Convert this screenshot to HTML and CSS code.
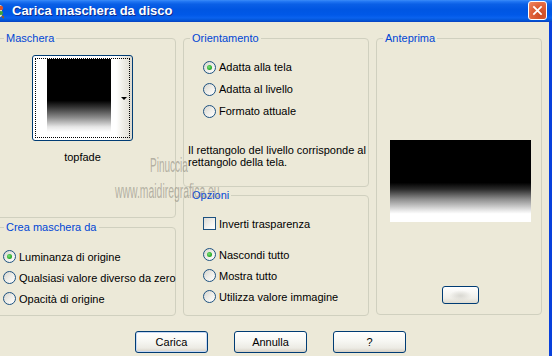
FILE: index.html
```html
<!DOCTYPE html>
<html lang="it">

<head>
    <meta charset="UTF-8">
    <meta name="viewport" content="width=device-width, initial-scale=1.0">
    <title>Carica maschera da disco</title>
    <link rel="stylesheet" href="styles.css">
</head>

<body>
    <div class="window">
        <div class="titlebar">
            <svg class="app-icon" viewBox="0 0 16 16">
                <rect x="2" y="2" width="12" height="12" rx="2" fill="#f2e6c8" />
                <circle cx="13" cy="5" r="2.2" fill="#e0542a" />
                <circle cx="13" cy="10" r="2" fill="#3aa53a" />
                <path d="M14 13 L16 15" stroke="#8b5a2b" stroke-width="2" />
            </svg>
            <span class="title">Carica maschera da disco</span>
            <span class="close-btn">
                <svg viewBox="0 0 19 19">
                    <path d="M5.5 5.5 L13.5 13.5 M13.5 5.5 L5.5 13.5" stroke="#fff" stroke-width="2" stroke-linecap="square" />
                </svg>
            </span>
        </div>

        <div class="dialog">
            <div class="columns">
                <div class="col col-left">
                    <fieldset class="group group-mask">
                        <legend>Maschera</legend>
                        <div class="mask-pick">
                            <div class="mask-btn">
                                <div class="mask-focus">
                                    <div class="mask-thumb"></div>
                                </div>
                                <span class="drop-arrow"></span>
                            </div>
                            <div class="mask-name">topfade</div>
                        </div>
                    </fieldset>
                    <fieldset class="group group-source">
                        <legend>Crea maschera da</legend>
                        <div class="opts opts-source">
                            <label class="opt"><span class="radio on"></span>Luminanza di origine</label>
                            <label class="opt"><span class="radio"></span>Qualsiasi valore diverso da zero</label>
                            <label class="opt"><span class="radio"></span>Opacità di origine</label>
                        </div>
                    </fieldset>
                </div>

                <div class="col col-mid">
                    <fieldset class="group group-orient">
                        <legend>Orientamento</legend>
                        <div class="opts opts-orient">
                            <label class="opt"><span class="radio on"></span>Adatta alla tela</label>
                            <label class="opt"><span class="radio"></span>Adatta al livello</label>
                            <label class="opt"><span class="radio"></span>Formato attuale</label>
                        </div>
                        <p class="note">Il rettangolo del livello corrisponde al rettangolo della tela.</p>
                    </fieldset>
                    <fieldset class="group group-options">
                        <legend>Opzioni</legend>
                        <div class="opts opts-options">
                            <label class="opt opt-check"><span class="checkbox"></span>Inverti trasparenza</label>
                            <div class="opt-gap"></div>
                            <label class="opt"><span class="radio on"></span>Nascondi tutto</label>
                            <label class="opt"><span class="radio"></span>Mostra tutto</label>
                            <label class="opt"><span class="radio"></span>Utilizza valore immagine</label>
                        </div>
                    </fieldset>
                </div>

                <div class="col col-right">
                    <fieldset class="group group-preview">
                        <legend>Anteprima</legend>
                        <div class="preview">
                            <div class="preview-img"></div>
                            <span class="preview-btn"></span>
                        </div>
                    </fieldset>
                </div>
            </div>

            <div class="actions">
                <span class="btn btn-default">Carica</span>
                <span class="btn">Annulla</span>
                <span class="btn">?</span>
            </div>
        </div>

        <!-- filigrana sopra la finestra -->
        <div class="watermark">
            <div class="wm-line wm-1">Pinuccia</div>
            <div class="wm-line wm-2">www.maidiregrafica.eu</div>
        </div>
    </div>
</body>

</html>
```

FILE: styles.css
```css
:root {
    --face: #ECE9D8;
    --group-line: #D0D0BF;
    --group-title: #0046D5;
    --ctrl-border: #1C5180;
    --btn-border: #003C74;
}

body {
    margin: 0;
    font-family: "Liberation Sans", Arial, sans-serif;
    font-size: 11px;
    color: #000;
}

.window {
    position: relative;
    width: 552px;
    height: 356px;
    overflow: hidden;
    background-color: var(--face);
}

/* barra del titolo stile XP */
.titlebar {
    display: flex;
    align-items: center;
    height: 22px;
    box-sizing: border-box;
    border-bottom: 1px solid #0846c6;
    background: linear-gradient(#3b8cf8 0%, #1f74f2 8%, #0a5fe6 20%, #0056e2 45%, #0058e8 70%, #0a62ee 85%, #0050d0 100%);
    color: #fff;
}

.app-icon {
    flex: none;
    width: 16px;
    height: 16px;
    margin-left: -12px;
    margin-right: 8px;
}

.title {
    flex: 1;
    font-size: 13px;
    font-weight: bold;
    text-shadow: 1px 1px 0 #0c2a8c;
}

.close-btn {
    width: 19px;
    height: 19px;
    margin-right: 5px;
    box-sizing: border-box;
    border: 1px solid #fff;
    border-radius: 3px;
    background: radial-gradient(circle at 70% 75%, #cc4a22 0%, #e0623a 55%, #f08a66 100%);
}

.close-btn svg {
    display: block;
    width: 17px;
    height: 17px;
}

.dialog {
    height: 334px;
    box-sizing: border-box;
    padding-top: 10px;
    border-right: 3px solid #0840dc;
}

.columns {
    display: flex;
    gap: 7px;
    margin-left: -5px;
}

.col {
    display: flex;
    flex-direction: column;
}

.col-left {
    width: 181px;
    gap: 3px;
}

.col-mid {
    width: 186px;
    gap: 2px;
}

.col-right {
    width: 166px;
}

.group {
    margin: 0;
    padding: 0;
    min-width: 0;
    box-sizing: border-box;
    border: 1px solid var(--group-line);
    border-radius: 4px;
}

.group legend {
    margin-left: 6px;
    padding: 0 2px;
    font-size: 11px;
    line-height: 13px;
    color: var(--group-title);
}

.col-left .group legend {
    margin-left: 8px;
}

.group-mask { height: 186px; }
.group-source { height: 95px; }
.group-orient { height: 155px; }
.group-options { height: 127px; }
.group-preview { height: 283px; }

/* selettore maschera */
.mask-pick {
    display: inline-flex;
    flex-direction: column;
    align-items: center;
    margin: 10px 0 0 36px;
}

.mask-btn {
    position: relative;
    width: 101px;
    height: 86px;
    box-sizing: border-box;
    padding: 2px;
    border: 1px solid var(--btn-border);
    border-radius: 3px;
    background: linear-gradient(to right, #fff 84%, #f1f0ea 90%, #dcd9cf 100%);
}

.mask-focus {
    height: 100%;
    box-sizing: border-box;
    border: 1px dotted #000;
    padding-left: 11px;
}

.mask-thumb {
    width: 64px;
    height: 73px;
    background: linear-gradient(#000 0%, #000 57%, #333 66%, #8a8a8a 80%, #e6e6e6 93%, #fff 100%);
}

.drop-arrow {
    position: absolute;
    right: 5px;
    top: 41px;
    border-left: 3px solid transparent;
    border-right: 3px solid transparent;
    border-top: 3px solid #000;
}

.mask-name {
    margin-top: 10px;
    line-height: 13px;
}

/* opzioni radio e checkbox */
.opts {
    display: flex;
    flex-direction: column;
}

.opt {
    display: flex;
    align-items: center;
    gap: 3px;
    height: 21px;
    white-space: nowrap;
}

.opts-orient {
    margin-top: 11px;
    padding-left: 19px;
}

.opts-orient .opt {
    height: 22px;
}

.opts-options {
    margin-top: 11px;
    padding-left: 19px;
}

.opt-gap {
    height: 10px;
}

.opts-source {
    margin-top: 12px;
    padding-left: 7px;
}

.radio {
    position: relative;
    flex: none;
    width: 13px;
    height: 13px;
    box-sizing: border-box;
    border: 1px solid var(--ctrl-border);
    border-radius: 50%;
    background: linear-gradient(135deg, #d6d5ce 0%, #eeede8 50%, #fff 100%);
}

.radio.on::after {
    content: "";
    position: absolute;
    left: 3px;
    top: 3px;
    width: 5px;
    height: 5px;
    border-radius: 50%;
    background: radial-gradient(circle at 40% 40%, #7ee07e 0%, #2fb02f 55%, #1a8f1a 100%);
}

.checkbox {
    flex: none;
    width: 13px;
    height: 13px;
    box-sizing: border-box;
    border: 1px solid var(--ctrl-border);
    background: linear-gradient(135deg, #dcdbd5 0%, #f4f3ef 60%, #fff 100%);
}

.note {
    margin: 22px 0 0 4px;
    line-height: 12px;
}

/* anteprima */
.preview {
    display: flex;
    flex-direction: column;
    align-items: center;
    padding-left: 3px;
}

.preview-img {
    width: 141px;
    height: 82px;
    margin-top: 95px;
    background: linear-gradient(#000 0%, #000 52%, #2a2a2a 60%, #8c8c8c 72%, #e8e8e8 86%, #fff 90%, #fff 100%);
}

.preview-btn {
    width: 37px;
    height: 18px;
    margin-top: 64px;
    box-sizing: border-box;
    border: 1px solid var(--btn-border);
    border-radius: 3px;
    background:
        radial-gradient(ellipse at 50% 55%, #d9d8d2 0%, rgba(255, 255, 255, 0) 45%),
        linear-gradient(#fff, #f0efe9 70%, #dedbd0);
}

/* pulsanti in basso */
.actions {
    display: flex;
    gap: 26px;
    margin-top: 15px;
    padding-left: 135px;
}

.btn {
    display: flex;
    align-items: center;
    justify-content: center;
    width: 73px;
    height: 22px;
    box-sizing: border-box;
    border: 1px solid var(--btn-border);
    border-radius: 3px;
    background: linear-gradient(#fff 0%, #f7f7f3 45%, #ecebe4 80%, #d6d0c5 100%);
}

.btn-default {
    box-shadow: inset 0 0 0 1px #c6d8f4;
}

/* filigrana */
.watermark {
    position: absolute;
    left: 0;
    top: 152px;
    font-size: 20px;
    line-height: 26px;
    color: rgba(130, 126, 116, 0.55);
    pointer-events: none;
}

.wm-line {
    transform-origin: left;
    white-space: nowrap;
}

.wm-1 {
    margin-left: 150px;
    transform: scaleX(0.5);
}

.wm-2 {
    margin-left: 115px;
    transform: scaleX(0.52);
}
```
